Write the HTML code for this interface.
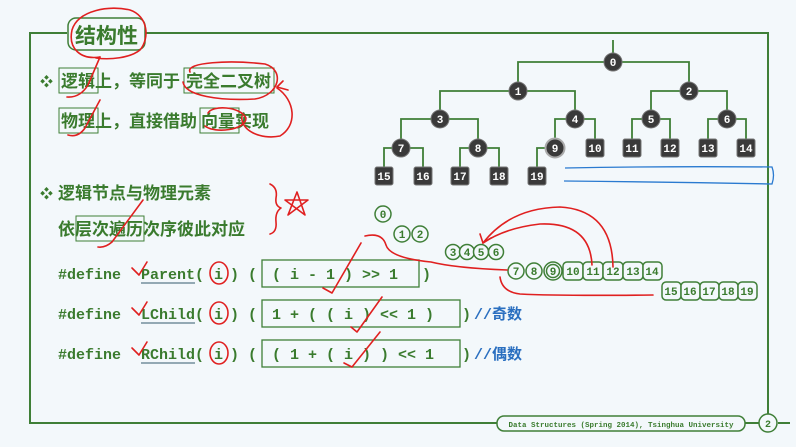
<!DOCTYPE html>
<html><head><meta charset="utf-8"><style>
html,body{margin:0;padding:0;background:#f3f8fb;}
svg{display:block}
.t{font-family:"Liberation Sans","Noto Sans CJK SC",sans-serif;font-weight:bold;fill:#3a7b2e;font-size:17px}
.m{font-family:"Liberation Mono",monospace;font-weight:bold;fill:#3a7b2e;font-size:15px}
.n{font-family:"Liberation Mono",monospace;font-weight:bold;fill:#fff;font-size:11px;text-anchor:middle}
.g{font-family:"Liberation Mono",monospace;font-weight:bold;fill:#3a7b2e;font-size:11px;text-anchor:middle}
.red{fill:none;stroke:#e02020;stroke-width:1.6;stroke-linecap:round;stroke-linejoin:round}
</style></head><body>
<svg width="796" height="447" viewBox="0 0 796 447" xmlns="http://www.w3.org/2000/svg">
<rect width="796" height="447" fill="#f3f8fb"/>
<g fill="none" stroke="#3f7f37" stroke-width="2">
<path d="M67 33H30V423H497M745 423H759M778 423H790"/>
<path d="M145 33H768V414"/>
</g>
<rect x="68" y="18" width="77" height="32" rx="8" fill="#f3f8fb" stroke="#3f7f37" stroke-width="1.5"/>
<text x="75" y="43" class="t" style="font-size:21px">结构性</text>
<text x="40" y="86" class="t" style="font-size:13px">❖</text>
<rect x="59" y="68" width="39" height="25" fill="none" stroke="#3f7f37"/>
<text x="61" y="87" class="t">逻辑上，等同于</text>
<rect x="184" y="68" width="90" height="25" fill="none" stroke="#3f7f37"/>
<text x="186" y="87" class="t">完全二叉树</text>
<rect x="59" y="108" width="39" height="25" fill="none" stroke="#3f7f37"/>
<text x="61" y="127" class="t">物理上，直接借助</text>
<rect x="200" y="108" width="39" height="25" fill="none" stroke="#3f7f37"/>
<text x="201" y="127" class="t">向量实现</text>
<text x="40" y="198" class="t" style="font-size:13px">❖</text>
<text x="58" y="199" class="t">逻辑节点与物理元素</text>
<rect x="76" y="216" width="68" height="25" fill="none" stroke="#3f7f37"/>
<text x="58" y="235" class="t">依层次遍历次序彼此对应</text>
<g class="m">
<text x="58" y="279">#define</text><text x="141" y="279">Parent(</text><text x="214" y="279">i</text><text x="230" y="279">) (</text>
<text x="58" y="319">#define</text><text x="141" y="319">LChild(</text><text x="214" y="319">i</text><text x="230" y="319">) (</text>
<text x="58" y="359">#define</text><text x="141" y="359">RChild(</text><text x="214" y="359">i</text><text x="230" y="359">) (</text>
<text x="272" y="279">( i - 1 ) &gt;&gt; 1</text><text x="422" y="279">)</text>
<text x="272" y="319">1 + ( ( i ) &lt;&lt; 1 )</text><text x="462" y="319">)</text>
<text x="272" y="359">( 1 + ( i ) ) &lt;&lt; 1</text><text x="462" y="359">)</text>
<text x="474" y="319" style="fill:#2a6fc0">//<tspan style="font-family:'Noto Sans CJK SC',sans-serif">奇数</tspan></text>
<text x="474" y="359" style="fill:#2a6fc0">//<tspan style="font-family:'Noto Sans CJK SC',sans-serif">偶数</tspan></text>
</g>
<g stroke="#5a7a8a" stroke-width="1.2"><path d="M141 283H195M141 323H195M141 363H195"/></g>
<g fill="none" stroke="#3f7f37" stroke-width="1.3">
<rect x="262" y="260" width="157" height="27"/>
<rect x="262" y="300" width="198" height="27"/>
<rect x="262" y="340" width="198" height="27"/>
</g>
<g fill="none" stroke="#3f7f37" stroke-width="1.8">
<path d="M613 40V62M518 100V62H689V100"/>
<path d="M440 128V91H575V128M651 128V91H727V128"/>
<path d="M401 157V119H478V157M555 157V119H595V148M632 148V119H670V148M708 148V119H746V148"/>
<path d="M384 176V148H423V176M460 176V148H499V176M537 176V148H555"/>
</g>
<g fill="#3a3a3a" stroke="#777" stroke-width="1">
<circle cx="613" cy="62" r="9"/><circle cx="518" cy="91" r="9"/><circle cx="689" cy="91" r="9"/>
<circle cx="440" cy="119" r="9"/><circle cx="575" cy="119" r="9"/><circle cx="651" cy="119" r="9"/><circle cx="727" cy="119" r="9"/>
<circle cx="401" cy="148" r="9"/><circle cx="478" cy="148" r="9"/><circle cx="555" cy="148" r="9.5" stroke="#aaa" stroke-width="2"/>
<rect x="586" y="139" width="18" height="18" rx="2"/><rect x="623" y="139" width="18" height="18" rx="2"/><rect x="661" y="139" width="18" height="18" rx="2"/><rect x="699" y="139" width="18" height="18" rx="2"/><rect x="737" y="139" width="18" height="18" rx="2"/>
<rect x="375" y="167" width="18" height="18" rx="2"/><rect x="414" y="167" width="18" height="18" rx="2"/><rect x="451" y="167" width="18" height="18" rx="2"/><rect x="490" y="167" width="18" height="18" rx="2"/><rect x="528" y="167" width="18" height="18" rx="2"/>
</g>
<g class="n">
<text x="613" y="66">0</text><text x="518" y="95">1</text><text x="689" y="95">2</text>
<text x="440" y="123">3</text><text x="575" y="123">4</text><text x="651" y="123">5</text><text x="727" y="123">6</text>
<text x="401" y="152">7</text><text x="478" y="152">8</text><text x="555" y="152">9</text>
<text x="595" y="152">10</text><text x="632" y="152">11</text><text x="670" y="152">12</text><text x="708" y="152">13</text><text x="746" y="152">14</text>
<text x="384" y="180">15</text><text x="423" y="180">16</text><text x="460" y="180">17</text><text x="499" y="180">18</text><text x="537" y="180">19</text>
</g>
<path d="M565 168Q670 166 772 167Q775 175 772 184Q670 182 564 181" fill="none" stroke="#2a7ad0" stroke-width="1.3"/>
<g fill="#f3f8fb" stroke="#3f7f37" stroke-width="1.5">
<circle cx="383" cy="214" r="8"/><circle cx="402" cy="234" r="8"/><circle cx="420" cy="234" r="8"/>
<circle cx="453" cy="252" r="7.5"/><circle cx="467" cy="252" r="7.5"/><circle cx="481" cy="252" r="7.5"/><circle cx="496" cy="252" r="7.5"/>
<circle cx="516" cy="271" r="8"/><circle cx="534" cy="271" r="8"/><circle cx="553" cy="271" r="9"/><circle cx="553" cy="271" r="6.5"/>
<rect x="563" y="262" width="20" height="18" rx="4"/><rect x="583" y="262" width="20" height="18" rx="4"/><rect x="603" y="262" width="20" height="18" rx="4"/><rect x="623" y="262" width="20" height="18" rx="4"/><rect x="643" y="262" width="19" height="18" rx="4"/>
<rect x="662" y="282" width="19" height="18" rx="4"/><rect x="681" y="282" width="19" height="18" rx="4"/><rect x="700" y="282" width="19" height="18" rx="4"/><rect x="719" y="282" width="19" height="18" rx="4"/><rect x="738" y="282" width="19" height="18" rx="4"/>
</g>
<g class="g">
<text x="383" y="218">0</text><text x="402" y="238">1</text><text x="420" y="238">2</text>
<text x="453" y="256">3</text><text x="467" y="256">4</text><text x="481" y="256">5</text><text x="496" y="256">6</text>
<text x="516" y="275">7</text><text x="534" y="275">8</text><text x="553" y="275">9</text>
<text x="573" y="275">10</text><text x="593" y="275">11</text><text x="613" y="275">12</text><text x="633" y="275">13</text><text x="652" y="275">14</text>
<text x="671" y="295">15</text><text x="690" y="295">16</text><text x="709" y="295">17</text><text x="728" y="295">18</text><text x="747" y="295">19</text>
</g>
<rect x="497" y="416" width="248" height="15" rx="7" fill="#f3f8fb" stroke="#3f7f37" stroke-width="1.5"/>
<text x="621" y="427" style="font-family:'Liberation Mono',monospace;font-size:7.5px;fill:#3a7b2e;font-weight:bold" text-anchor="middle">Data Structures (Spring 2014), Tsinghua University</text>
<circle cx="768" cy="423" r="9" fill="#f3f8fb" stroke="#3f7f37" stroke-width="1.5"/>
<text x="768" y="427" class="g" style="font-size:10px">2</text>
<g class="red">
<path d="M100 57C80 60 68 48 72 30C78 10 110 5 130 10C148 16 150 38 140 50C130 58 110 60 96 58"/>
<path d="M100 57L88 85Q80 98 67 97"/>
<path d="M100 100L85 128Q78 138 68 135"/>
<path d="M190 72C185 62 230 60 265 64C285 70 280 95 255 99C220 101 185 96 183 82"/>
<path d="M277 88C295 100 298 125 280 136C260 140 240 130 242 116"/>
<path d="M277 87L283 81M277 87L288 90"/>
<path d="M208 113C212 105 240 106 246 118C246 130 215 134 205 126"/>
<path d="M270 184Q278 188 276 198Q275 206 281 208Q275 212 276 222Q277 232 270 234"/>
<path d="M288 215L297 192L305 215L285 200L308 200Z"/>
<path d="M143 200L112 242Q105 248 98 247"/>
<path d="M132 268L139 275L147 262"/>
<path d="M132 308L139 315L147 302"/>
<path d="M132 348L139 355L147 342"/>
<ellipse cx="219" cy="273" rx="9" ry="11"/>
<ellipse cx="219" cy="313" rx="9" ry="11"/>
<ellipse cx="219" cy="353" rx="9" ry="11"/>
<path d="M323 288L332 293L361 243"/>
<path d="M351 327L357 332L382 297"/>
<path d="M344 363L352 367L380 332"/>
<path d="M365 236Q382 232 386 245Q390 258 431 262Q455 268 507 270"/>
<path d="M500 277Q502 292 520 294Q560 296 653 295"/>
<path d="M592 265Q590 222 540 224Q505 228 483 243"/>
<path d="M613 267Q612 210 560 207Q510 208 483 243"/>
<path d="M483 243L480 234M483 243L491 238"/>
</g>
</svg>
</body></html>
